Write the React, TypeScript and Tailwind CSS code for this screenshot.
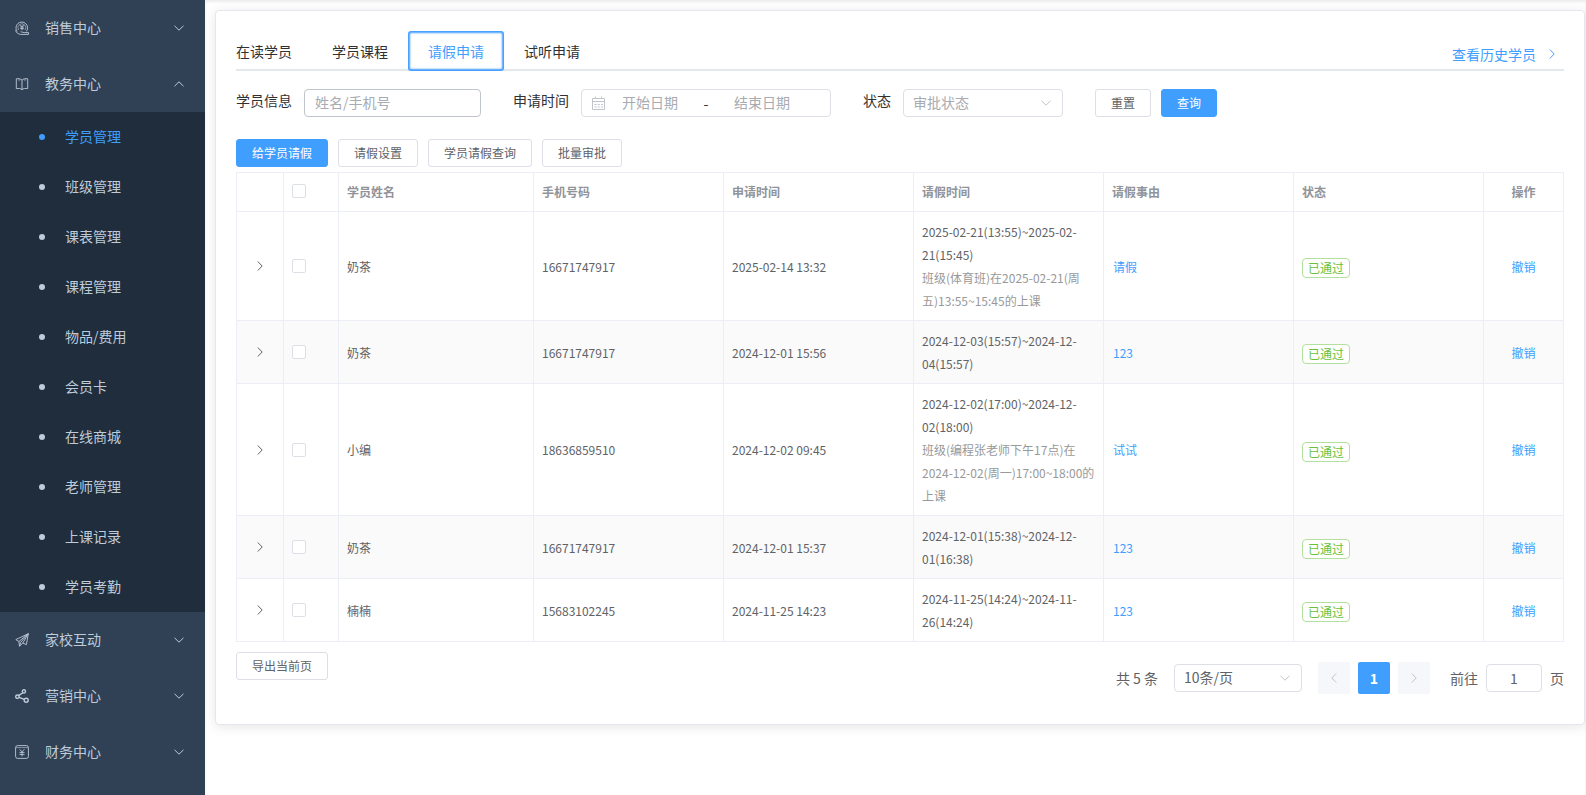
import { useState, type ReactNode } from 'react'
import clsx from 'clsx'

interface LeaveRecord {
  id: number
  name: string
  phone: string
  appliedAt: string
  period: string
  lesson?: string
  reason: string
}

const subMenu = ['学员管理', '班级管理', '课表管理', '课程管理', '物品/费用', '会员卡', '在线商城', '老师管理', '上课记录', '学员考勤']
const tabs = ['在读学员', '学员课程', '请假申请', '试听申请']

const records: LeaveRecord[] = [
  {
    id: 1,
    name: '奶茶',
    phone: '16671747917',
    appliedAt: '2025-02-14 13:32',
    period: '2025-02-21(13:55)~2025-02-21(15:45)',
    lesson: '班级(体育班)在2025-02-21(周五)13:55~15:45的上课',
    reason: '请假',
  },
  {
    id: 2,
    name: '奶茶',
    phone: '16671747917',
    appliedAt: '2024-12-01 15:56',
    period: '2024-12-03(15:57)~2024-12-04(15:57)',
    reason: '123',
  },
  {
    id: 3,
    name: '小编',
    phone: '18636859510',
    appliedAt: '2024-12-02 09:45',
    period: '2024-12-02(17:00)~2024-12-02(18:00)',
    lesson: '班级(编程张老师下午17点)在2024-12-02(周一)17:00~18:00的上课',
    reason: '试试',
  },
  {
    id: 4,
    name: '奶茶',
    phone: '16671747917',
    appliedAt: '2024-12-01 15:37',
    period: '2024-12-01(15:38)~2024-12-01(16:38)',
    reason: '123',
  },
  {
    id: 5,
    name: '楠楠',
    phone: '15683102245',
    appliedAt: '2024-11-25 14:23',
    period: '2024-11-25(14:24)~2024-11-26(14:24)',
    reason: '123',
  },
]

const chevrons = {
  down: 'M1.5 3.8 6 8.2l4.5-4.4',
  up: 'M1.5 8.2 6 3.8l4.5 4.4',
  left: 'M8.2 1.5 3.8 6l4.4 4.5',
  right: 'M3.8 1.5 8.2 6l-4.4 4.5',
}

function Chevron({ dir, className }: { dir: keyof typeof chevrons; className?: string }) {
  return (
    <svg viewBox="0 0 12 12" className={clsx('size-3 shrink-0', className)} fill="none" stroke="currentColor" aria-hidden="true">
      <path d={chevrons[dir]} />
    </svg>
  )
}

function MenuIcon({ children }: { children: ReactNode }) {
  return (
    <svg viewBox="0 0 14 14" className="size-3.5 shrink-0" fill="none" stroke="currentColor" strokeWidth="0.9" aria-hidden="true">
      {children}
    </svg>
  )
}

const icons = {
  sales: (
    <MenuIcon>
      <path d="M2.2 10.4A5.8 5.8 0 1 1 11.4 10.4" />
      <path d="M3.7 9A3.9 3.9 0 1 1 10 9" strokeWidth="0.6" />
      <path d="M5.2 3.8 7 5.8l1.8-2M7 5.8v3.4M5.2 6h3.6M5.2 7.6h3.6" />
      <path d="M.6 9.2c.5 2.4 2.6 4 5 4.200h7.900v-1.800H9.200c-1.400 0-2.200-.8-3.600-.8" />
    </MenuIcon>
  ),
  teaching: (
    <MenuIcon>
      <path d="M7 3.2C6 1.8 3.500 1.400 1.300 1.800v9.800c2.200-.3 4.500-.2 5.700 1 1.200-1.200 3.500-1.300 5.700-1V1.800C10.500 1.400 8 1.800 7 3.200v9.400" />
      <path d="M4 1.800v2.400M10 1.800v2.400" strokeWidth="0.6" />
    </MenuIcon>
  ),
  family: (
    <MenuIcon>
      <path d="M13.300.7.8 6.600l3.100 1.900L13.300.7l-1.900 10.900-3.600-1.500L13.300.7M3.900 8.500l.6 4.700 3.300-3.100M4.500 13.200l1.200-3.900 7.600-8.600" />
    </MenuIcon>
  ),
  marketing: (
    <MenuIcon>
      <g strokeWidth="1.4">
        <circle cx="8.900" cy="2.400" r="1.600" />
        <circle cx="2.400" cy="7.700" r="1.700" />
        <circle cx="11.200" cy="11.200" r="2" />
        <path d="M7.800 3.700 3.700 6.600M4.100 8.300l5.200 2.100" />
      </g>
    </MenuIcon>
  ),
  finance: (
    <MenuIcon>
      <rect x=".6" y=".6" width="12.800" height="12.800" rx="2" />
      <path d="M1 2.600h12" strokeWidth="0.6" />
      <path d="M4.700 4.300 7 6.900l2.300-2.600M7 6.900v4.500M4.500 7.400h5M4.500 9.400h5" />
    </MenuIcon>
  ),
}

function MenuGroup({ icon, label, open }: { icon: ReactNode; label: string; open?: boolean }) {
  return (
    <button type="button" aria-expanded={!!open} className="flex h-14 w-full items-center gap-4 pr-5 pl-[15px] text-left">
      {icon}
      <span className="flex-1 pb-0.5">{label}</span>
      <Chevron dir={open ? 'up' : 'down'} />
    </button>
  )
}

function Sidebar() {
  return (
    <nav className="w-[205px] shrink-0 bg-[#304156] text-sm text-[#bfcbd9]">
      <MenuGroup icon={icons.sales} label="销售中心" />
      <MenuGroup icon={icons.teaching} label="教务中心" open />
      <ul className="bg-[#1f2d3d]">
        {subMenu.map((item, i) => (
          <li key={item}>
            <a href="#" className={clsx('flex h-[50px] items-center gap-5 pl-[39px]', i === 0 && 'text-[#409eff]')}>
              <span className="size-1.5 rounded-full bg-current" />
              <span className="pb-0.5">{item}</span>
            </a>
          </li>
        ))}
      </ul>
      <MenuGroup icon={icons.family} label="家校互动" />
      <MenuGroup icon={icons.marketing} label="营销中心" />
      <MenuGroup icon={icons.finance} label="财务中心" />
    </nav>
  )
}

function Button({ primary, children }: { primary?: boolean; children: ReactNode }) {
  return (
    <button
      type="button"
      className={clsx(
        'flex h-7 items-center rounded-[3px] border px-[15px] text-xs',
        primary ? 'border-[#409eff] bg-[#409eff] text-white' : 'border-[#dcdfe6] bg-white text-[#606266]'
      )}
    >
      {children}
    </button>
  )
}

function Checkbox({ label }: { label: string }) {
  return (
    <input
      type="checkbox"
      aria-label={label}
      className="block size-3.5 appearance-none rounded-xs border border-[#dcdfe6] bg-white checked:border-[#409eff] checked:bg-[#409eff]"
    />
  )
}

function Filters() {
  return (
    <form className="mt-[18px] flex h-7 items-center text-sm text-[#303133]">
      <label htmlFor="keyword" className="mr-3 mb-1.5">学员信息</label>
      <input
        id="keyword"
        placeholder="姓名/手机号"
        className="h-7 w-[177px] rounded border border-[#c0c4cc] px-2.5 pb-0.5 placeholder:text-[#a8abb2] outline-none"
      />

      <label htmlFor="start" className="mr-3 mb-1.5 ml-8">申请时间</label>
      <div className="flex h-7 w-[250px] items-center rounded border border-[#dcdfe6] pl-2.5">
        <svg viewBox="0 0 14 14" className="size-3.5 shrink-0 text-[#c0c4cc]" fill="none" stroke="currentColor" aria-hidden="true">
          <path d="M.5 2.500h12v11H.5zM.5 5.500h12M3.500.5v2M9.500.5v2" />
          <path d="M2.500 8.500h8.500M2.500 11h8.500" strokeDasharray="2 1.200" />
        </svg>
        <input id="start" placeholder="开始日期" className="w-[88px] pb-0.5 text-center placeholder:text-[#a8abb2] outline-none" />
        <span className="w-6 text-center">-</span>
        <input aria-label="结束日期" placeholder="结束日期" className="w-[88px] pb-0.5 text-center placeholder:text-[#a8abb2] outline-none" />
      </div>

      <label htmlFor="status" className="mr-3 mb-1.5 ml-8">状态</label>
      <div className="relative mr-8">
        <select
          id="status"
          defaultValue=""
          className="block h-7 w-40 appearance-none rounded border border-[#dcdfe6] bg-white px-[9px] pb-0.5 text-[#a8abb2] outline-none"
        >
          <option value="">审批状态</option>
          <option value="passed">已通过</option>
        </select>
        <Chevron dir="down" className="pointer-events-none absolute top-2 right-[11px] text-[#c0c4cc]" />
      </div>

      <div className="flex gap-2.5">
        <Button>重置</Button>
        <Button primary>查询</Button>
      </div>
    </form>
  )
}

const thClass = 'h-[39px] border-r border-b border-[#ebeef5] px-2 pb-0.5 font-bold'
const tdClass = 'border-r border-b border-[#ebeef5] px-2 py-2'

function LeaveTable() {
  return (
    <table className="mt-[5px] w-full table-fixed border-separate border-spacing-0 border-t border-l border-[#ebeef5] text-xs leading-[23px] text-[#606266]">
      <colgroup>
        <col className="w-[47px]" />
        <col className="w-[55px]" />
        <col className="w-[195px]" />
        <col />
        <col />
        <col />
        <col />
        <col />
        <col className="w-20" />
      </colgroup>
      <thead className="text-left text-[#909399]">
        <tr>
          <th className={thClass} />
          <th className={thClass}><Checkbox label="全选" /></th>
          <th className={thClass}>学员姓名</th>
          <th className={thClass}>手机号码</th>
          <th className={thClass}>申请时间</th>
          <th className={thClass}>请假时间</th>
          <th className={thClass}>请假事由</th>
          <th className={thClass}>状态</th>
          <th className={clsx(thClass, 'text-center')}>操作</th>
        </tr>
      </thead>
      <tbody>
        {records.map((row) => (
          <tr key={row.id} className="even:bg-[#fafafa]">
            <td className={tdClass}>
              <button type="button" aria-label="展开" className="mx-auto block">
                <Chevron dir="right" />
              </button>
            </td>
            <td className={tdClass}><Checkbox label={row.name} /></td>
            <td className={tdClass}>{row.name}</td>
            <td className={tdClass}>{row.phone}</td>
            <td className={tdClass}>{row.appliedAt}</td>
            <td className={tdClass}>
              <p>{row.period}</p>
              {row.lesson && <p className="text-[#999999]">{row.lesson}</p>}
            </td>
            <td className={tdClass}>
              <a href="#" className="px-px text-[#409eff]">{row.reason}</a>
            </td>
            <td className={tdClass}>
              <span className="mt-1 block h-5 w-fit rounded border border-[#b3e19d] bg-white px-[5px] leading-[18px] text-[#67c23a]">
                已通过
              </span>
            </td>
            <td className={clsx(tdClass, 'text-center')}>
              <a href="#" className="text-[#409eff]">撤销</a>
            </td>
          </tr>
        ))}
      </tbody>
    </table>
  )
}

function Pagination() {
  return (
    <div className="mt-2.5 flex items-center text-sm text-[#606266]">
      <span>共 5 条</span>
      <div className="relative mx-4">
        <select
          aria-label="每页条数"
          className="block h-7 w-32 appearance-none rounded border border-[#dcdfe6] bg-white px-[9px] pb-0.5 outline-none"
        >
          <option>10条/页</option>
          <option>20条/页</option>
        </select>
        <Chevron dir="down" className="pointer-events-none absolute top-2 right-[11px] text-[#c0c4cc]" />
      </div>
      <div className="flex gap-2">
        <button type="button" aria-label="上一页" className="flex size-8 items-center justify-center rounded-xs bg-[#f5f7fa] text-[#c0c4cc]">
          <Chevron dir="left" />
        </button>
        <button type="button" className="size-8 rounded-xs bg-[#409eff] font-bold text-white">1</button>
        <button type="button" aria-label="下一页" className="flex size-8 items-center justify-center rounded-xs bg-[#f5f7fa] text-[#c0c4cc]">
          <Chevron dir="right" />
        </button>
      </div>
      <label htmlFor="page" className="mr-2 ml-5">前往</label>
      <input id="page" defaultValue="1" className="mr-2 h-7 w-14 rounded border border-[#dcdfe6] text-center outline-none" />
      <span>页</span>
    </div>
  )
}

export default function App() {
  const [activeTab, setActiveTab] = useState('请假申请')

  return (
    <div className="flex min-h-screen bg-white font-['Noto_Sans_CJK_SC',sans-serif]">
      <Sidebar />
      <main className="min-w-0 flex-1 pt-2.5 pr-px pb-2.5 pl-2.5 shadow-[inset_0_2px_3px_rgba(0,0,0,0.08)]">
        <section className="rounded border border-[#e4e7ed] bg-white px-5 pt-5 pb-[30px] shadow-[0_2px_12px_rgba(0,0,0,0.1)]">
          <div className="flex h-10 items-center justify-between border-b-2 border-[#e4e7ed]">
            <div role="tablist" className="-ml-5 flex">
              {tabs.map((tab) => (
                <button
                  key={tab}
                  type="button"
                  role="tab"
                  aria-selected={tab === activeTab}
                  onClick={() => setActiveTab(tab)}
                  className={clsx(
                    '-mb-0.5 h-10 px-5 text-sm',
                    tab === activeTab ? 'rounded-[3px] text-[#409eff] shadow-[inset_0_0_2px_2px_#409eff]' : 'text-[#303133]'
                  )}
                >
                  {tab}
                </button>
              ))}
            </div>
            <a href="#" className="mt-2 mr-1.5 flex items-center gap-2.5 text-sm text-[#409eff]">
              查看历史学员
              <Chevron dir="right" />
            </a>
          </div>

          <Filters />

          <div className="mt-[22px] flex gap-2.5">
            <Button primary>给学员请假</Button>
            <Button>请假设置</Button>
            <Button>学员请假查询</Button>
            <Button>批量审批</Button>
          </div>

          <LeaveTable />

          <div className="mt-2.5 flex items-start justify-between">
            <Button>导出当前页</Button>
            <Pagination />
          </div>
        </section>
      </main>
    </div>
  )
}
